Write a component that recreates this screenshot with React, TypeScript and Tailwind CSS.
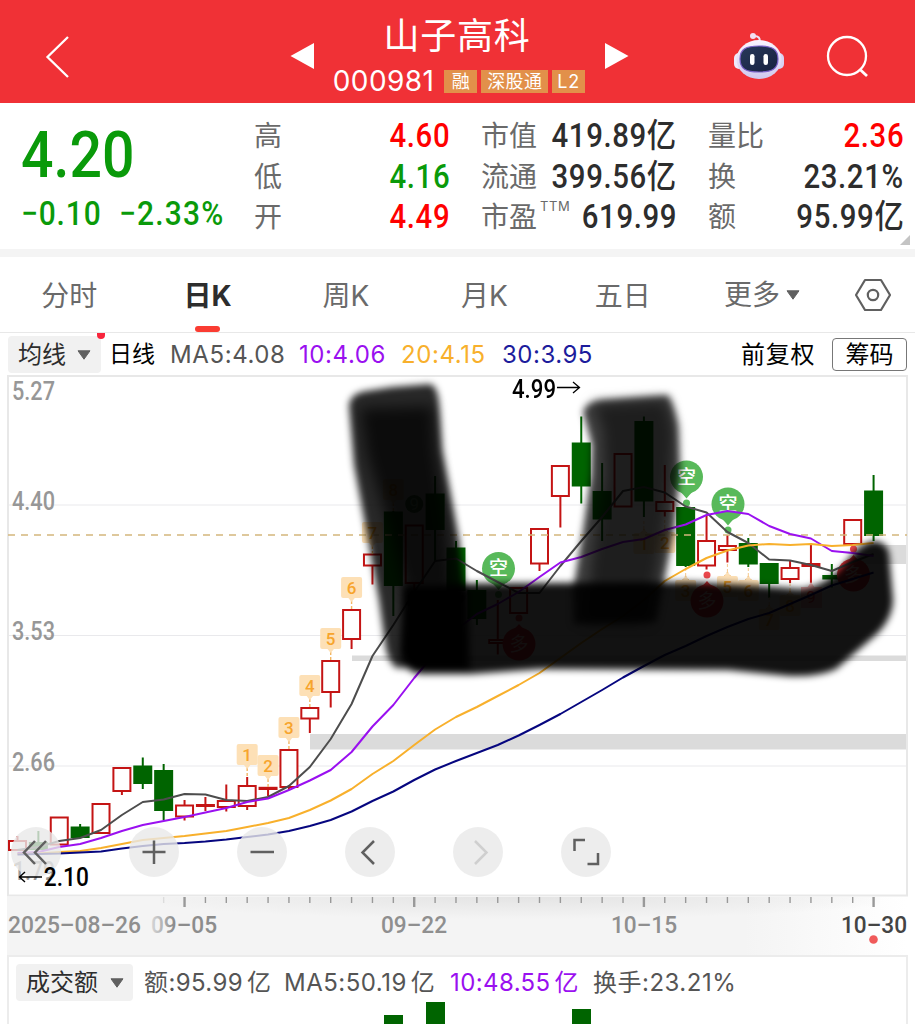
import type { ReactNode } from 'react'

const stats = [
  {
    width: 'w-[196px]',
    rows: [
      { label: '高', value: '4.60', color: 'text-[#ff0000]' },
      { label: '低', value: '4.16', color: 'text-[#0a9a0a]' },
      { label: '开', value: '4.49', color: 'text-[#ff0000]' },
    ],
  },
  {
    width: 'w-[196px]',
    rows: [
      { label: '市值', value: '419.89亿', color: 'text-[#2d2d2d]' },
      { label: '流通', value: '399.56亿', color: 'text-[#2d2d2d]' },
      { label: '市盈', sup: 'TTM', value: '619.99', color: 'text-[#2d2d2d]' },
    ],
  },
  {
    width: 'w-[196px]',
    rows: [
      { label: '量比', value: '2.36', color: 'text-[#ff0000]' },
      { label: '换', value: '23.21%', color: 'text-[#2d2d2d]' },
      { label: '额', value: '95.99亿', color: 'text-[#2d2d2d]' },
    ],
  },
]

const RED = '#c41414'
const GREEN = '#006400'
const STEP = 20.88
const cx = (i: number) => 17.5 + i * STEP

// [up?, high, bodyTop, bodyBottom, low]
const candles: [boolean, number, number, number, number][] = [
  [true, 836, 841, 850, 850],
  [false, 831, 843, 849, 849],
  [true, 817, 817.5, 844.5, 845],
  [false, 824, 827.5, 837, 838],
  [true, 804, 804, 833, 834],
  [true, 768, 768, 791, 795],
  [false, 757.5, 766.5, 783, 789],
  [false, 764, 771, 810, 820],
  [true, 800, 805.5, 816.5, 820.5],
  [true, 797, 805, 806, 811],
  [true, 784.5, 801, 807, 811.5],
  [true, 777, 786, 806, 810],
  [true, 787, 787.8, 789, 796],
  [true, 750, 750, 787, 790],
  [true, 708, 708, 718.5, 733],
  [true, 661, 661, 692, 707.5],
  [true, 610, 610, 639, 649],
  [true, 554, 554.5, 565.5, 584.5],
  [false, 511, 512.5, 585, 616],
  [true, 525.5, 525.5, 583, 590],
  [false, 476, 494.5, 529, 561],
  [false, 541, 548.5, 590, 592],
  [false, 580, 591, 618, 625],
  [true, 600, 640, 643, 654.5],
  [true, 588, 588, 613, 613],
  [true, 529, 529, 563.5, 571],
  [true, 466, 466, 496, 527.5],
  [false, 416.5, 443.5, 485.5, 503.5],
  [false, 463, 492, 518.5, 541],
  [true, 454, 454, 506.5, 506.5],
  [false, 416.5, 422, 500.5, 517],
  [true, 465, 502, 511, 516.5],
  [false, 507, 508, 565, 567],
  [true, 515, 541, 565.5, 569.5],
  [true, 535, 546, 550, 562.5],
  [false, 538, 544, 563.5, 567],
  [false, 563, 564, 583, 598],
  [true, 560, 568, 579, 583],
  [true, 543, 564, 566, 583],
  [false, 564, 576, 578.5, 587.5],
  [true, 520, 520, 544, 544],
  [false, 475, 491.5, 535, 541],
]

const averages = [
  {
    color: '#4d4d4d',
    values: [850, 847, 841, 838, 830, 815, 802, 799.5, 794, 794.5, 800, 801, 797, 786, 767, 739, 704, 656, 625, 592, 561, 558.5, 571, 582, 593, 593, 566, 541, 517, 491, 487, 492.5, 506.5, 512.5, 532, 543, 559.5, 560.5, 565, 571, 562, 554],
  },
  {
    color: '#9a10f0',
    values: [853, 852, 847, 844, 838, 831, 825, 821, 817, 812.5, 808, 802, 798.5, 790, 780.5, 770, 752, 726.5, 705, 678, 653, 630, 614, 604, 592, 577, 562.5, 557, 549, 542, 539, 530, 524.5, 515, 511, 514, 526, 534, 538.5, 551, 553, 556],
  },
  {
    color: '#f8b02c',
    values: [854, 853.5, 852, 851, 848, 844, 840, 838, 836, 833.5, 831, 827, 823, 818, 810, 800.5, 789, 774, 761, 745, 729.5, 717, 707, 696, 685, 673, 658, 643, 629, 616, 600, 581, 569, 558, 550.5, 545.5, 544, 545, 544, 546, 545, 543],
  },
  {
    color: '#06067f',
    values: [854.5, 854, 853.5, 852.5, 851.5, 848.5, 846, 844, 843, 841.5, 839.5, 837, 834.5, 831, 826, 820, 811.5, 801, 791.5, 780, 769.5, 761, 753, 745, 735.5, 725, 714, 702, 690, 677.5, 666, 655, 646, 636, 627, 619, 613, 604, 595, 585.5, 579, 572.5],
  },
]

const countsAbove: [number, number, string][] = [
  [11, 744, '1'],
  [12, 755, '2'],
  [13, 717, '3'],
  [14, 675, '4'],
  [15, 628, '5'],
  [16, 577, '6'],
  [17, 522, '7'],
  [18, 479, '8'],
]

const countsBelow: [number, number, string][] = [
  [30, 530, '1'],
  [31, 529, '2'],
  [32, 577, '3'],
  [34, 573, '5'],
  [35, 577, '6'],
  [36, 606, '7'],
  [37, 592, '8'],
]

function Value({ children, className = '' }: { children: ReactNode; className?: string }) {
  return (
    <span className={'inline-block whitespace-nowrap font-[Roboto,"Noto_Sans_CJK_SC",sans-serif] font-medium ' + className}>
      {children}
    </span>
  )
}

function Caret({ className = '' }: { className?: string }) {
  return (
    <svg width="14" height="10" viewBox="0 0 14 10" className={className}>
      <path d="M1 0.8h12L7 9.2z" fill="#606060" stroke="#606060" strokeLinejoin="round" />
    </svg>
  )
}

function Robot() {
  return (
    <svg width="52" height="48" viewBox="0 0 52 48">
      <defs>
        <linearGradient id="shell" x1="0" y1="0" x2="0" y2="1">
          <stop offset="0" stopColor="#fbf5ff" />
          <stop offset="1" stopColor="#cfc8ee" />
        </linearGradient>
        <linearGradient id="face" x1="0" y1="0" x2="1" y2="1">
          <stop offset="0" stopColor="#28395a" />
          <stop offset="1" stopColor="#17203f" />
        </linearGradient>
      </defs>
      <path d="M26.500 10C27.500 6 25.500 4 21 4" fill="none" stroke="#ece4f8" strokeWidth="2" />
      <circle cx="20" cy="4" r="3" fill="#f3dff2" />
      <rect x="1" y="21" width="10" height="16" rx="5" fill="#efe9fb" />
      <rect x="41" y="21" width="10" height="16" rx="5" fill="#d9d2f3" />
      <ellipse cx="26" cy="27.500" rx="22.500" ry="19.500" fill="url(#shell)" />
      <path d="M26 14c13 0 19 3 19 13s-6 13-19 13S7 37 7 27s6-13 19-13z" fill="url(#face)" stroke="#7b62c8" strokeWidth="1.200" />
      <rect x="17" y="22" width="4.500" height="11" rx="2.200" fill="#fff" />
      <rect x="30.500" y="22" width="4.500" height="11" rx="2.200" fill="#fff" />
    </svg>
  )
}

function Header() {
  return (
    <header className="flex h-[103px] items-start bg-[#f03136] text-white">
      <svg width="30" height="46" viewBox="0 0 30 46" className="mt-[34px] ml-[42px]">
        <path d="M26 3L5.500 23L26 43" fill="none" stroke="#fff" strokeWidth="2.300" />
      </svg>
      <svg width="24" height="26" viewBox="0 0 24 26" className="mt-[43px] ml-[218px]">
        <path d="M0.500 13L24 0v26z" fill="#fff" />
      </svg>
      <div className="ml-[10px] flex w-[270px] flex-col items-center">
        <h1 className="mt-[9px] mr-[4px] text-[36px] leading-[54px] tracking-[0.8px]">山子高科</h1>
        <div className="mt-[2px] flex items-center gap-1">
          <span className="mr-[6px] text-[28px] leading-[32px] tracking-[0.4px]">000981</span>
          <span className="flex h-[23px] w-[33px] items-center justify-center bg-[#e2904a] text-[18px]">融</span>
          <span className="flex h-[23px] w-[67px] items-center justify-center bg-[#e2904a] text-[18px] tracking-[0.3px]">深股通</span>
          <span className="flex h-[23px] w-[33px] items-center justify-center bg-[#e2904a] text-[18px] tracking-[1px]">L2</span>
        </div>
      </div>
      <svg width="24" height="26" viewBox="0 0 24 26" className="mt-[43px] ml-[11px]">
        <path d="M23.500 13L0 0v26z" fill="#fff" />
      </svg>
      <div className="mt-[32px] ml-[104px]"><Robot /></div>
      <svg width="46" height="46" viewBox="0 0 46 46" className="mt-[34px] ml-[40px]">
        <circle cx="22" cy="22" r="19" fill="none" stroke="#fff" strokeWidth="2.300" />
        <path d="M34.500 35L42 42" stroke="#fff" strokeWidth="2.800" />
      </svg>
    </header>
  )
}

function Quote() {
  return (
    <section className="relative flex h-[146px] pt-[13px]">
      <div className="ml-[21px] w-[233px] text-[#0a9a0a]">
        <Value className="mt-[6px] origin-left scale-x-[0.88] text-[65px] leading-[66px]">4.20</Value>
        <div className="flex text-[34px] leading-[40px]">
          <Value className="mt-[5px] w-[98px] origin-left scale-x-[0.88] tracking-[1px]">−0.10</Value>
          <Value className="mt-[5px] origin-left scale-x-[0.88] tracking-[1.4px]">−2.33%</Value>
        </div>
      </div>
      <div className="flex gap-[31px]">
        {stats.map((col, i) => (
          <div key={i} className={col.width}>
            {col.rows.map((row) => (
              <div key={row.label} className="flex h-[40.500px] items-center justify-between">
                <span className="flex items-start text-[28px] leading-[40px] whitespace-nowrap text-[#6a6a6a]">
                  {row.label}
                  {row.sup && <span className="mt-[1px] ml-[3px] w-0 text-[13px] leading-[16px] tracking-[0.6px]">{row.sup}</span>}
                </span>
                <Value className={'-ml-8 origin-right scale-x-[0.89] text-[33px] leading-[40px] tracking-[0.7px] ' + row.color}>{row.value}</Value>
              </div>
            ))}
          </div>
        ))}
      </div>
      <svg width="10" height="10" className="absolute right-[5px] bottom-[4px]"><path d="M10 0v10H0z" fill="#c4c4c4" /></svg>
    </section>
  )
}

function Tabs() {
  const tabs = ['分时', '日K', '周K', '月K', '五日']
  return (
    <nav className="flex h-[76px] items-center border-b border-[#e8e8e8] text-[28px] text-[#6a6a6a]">
      {tabs.map((tab) => (
        <div key={tab} className={'flex h-full w-[138.400px] flex-col items-center justify-end ' + (tab === '日K' ? 'font-bold text-[#2d2d2d]' : '')}>
          <span className="leading-[40px]">{tab}</span>
          {tab === '日K' ? <i className="mt-[10px] h-[6px] w-[25px] rounded-full bg-[#fa3c32]" /> : <i className="mt-[10px] h-[6px]" />}
        </div>
      ))}
      <span className="ml-[32px] flex items-center gap-[6px]">更多<Caret /></span>
      <svg width="38" height="36" viewBox="0 0 38 36" className="ml-[54px]">
        <path d="M11 3h16l9 15l-9 15H11L2 18z" fill="none" stroke="#606060" strokeWidth="2.200" strokeLinejoin="round" />
        <circle cx="19" cy="18" r="5.200" fill="none" stroke="#606060" strokeWidth="2.200" />
      </svg>
    </nav>
  )
}

function AverageBar() {
  return (
    <div className="relative flex h-[42px] items-center pt-px pl-2 text-[24px] whitespace-nowrap text-black">
      <div className="flex h-[37px] w-[93px] items-center gap-[11px] rounded bg-[#f1f1f1] pl-[10px] text-[#2d2d2d]">均线<Caret /></div>
      <i className="absolute top-0 left-[97px] h-[6px] w-[8px] rounded-b-full bg-[#f8253c]" />
      <span className="ml-[8px] w-[61px] text-[23px]">日线</span>
      <span className="w-[129px] tracking-[0.600px] text-[#555]">MA5:4.08</span>
      <span className="w-[102px] tracking-[0.600px] text-[#9a10f0]">10:4.06</span>
      <span className="w-[101px] tracking-[0.600px] text-[#f8b02c]">20:4.15</span>
      <span className="w-[239px] tracking-[0.500px] text-[#1c1c9c]">30:3.95</span>
      <span className="w-[73px] tracking-[0.700px]">前复权</span>
      <span className="ml-[18px] flex h-[33px] w-[75px] items-center justify-center rounded border border-[#777]">筹码</span>
    </div>
  )
}

function CountTag({ x, y, text, below }: { x: number; y: number; text: string; below?: boolean }) {
  return (
    <g fill="#fde0b6">
      {below
        ? <path d={`M${x - 4} ${y + 4}l4 -5l4 5zM${x} ${y - 1}v-8`} stroke="#f6c98c" strokeDasharray="3 2" />
        : <path d={`M${x} ${y + 24}v10`} stroke="#f3b663" strokeWidth="1.400" strokeDasharray="3 2" />}
      {!below && <path d={`M${x - 4} ${y + 20}h8l-4 5z`} />}
      <rect x={x - 10.500} y={below ? y + 3 : y} width="21" height="21" rx="2" />
      <text x={x} y={y + (below ? 20 : 17)} textAnchor="middle" fontSize="17" fontWeight="500" fontFamily="Roboto" fill="#f7a42c">{text}</text>
    </g>
  )
}

function ShortPin({ x, y }: { x: number; y: number }) {
  return (
    <g>
      <path d={`M${x - 14} ${y + 8}Q${x - 5} ${y + 15} ${x} ${y + 21.500}Q${x + 5} ${y + 15} ${x + 14} ${y + 8}z`} fill="#58b95a" />
      <circle cx={x} cy={y} r="16.500" fill="#58b95a" />
      <circle cx={x} cy={y + 26} r="3.500" fill="#58b95a" />
      <text x={x} y={y + 6.500} textAnchor="middle" fontSize="19" fontWeight="500" fill="#fff">空</text>
    </g>
  )
}

function LongPin({ x, y }: { x: number; y: number }) {
  return (
    <g>
      <path d={`M${x - 13} ${y - 9}Q${x - 4} ${y - 15} ${x} ${y - 20}Q${x + 4} ${y - 15} ${x + 13} ${y - 9}z`} fill="#e8353a" />
      <circle cx={x} cy={y} r="16.500" fill="#e8353a" />
      <circle cx={x} cy={y - 26} r="3.500" fill="#ea474c" />
      <text x={x} y={y + 7} textAnchor="middle" fontSize="19" fill="#ffc8c8">多</text>
    </g>
  )
}

// Hand-drawn marker over the price area
function Marker() {
  return (
    <g fill="#000">
      <g filter="url(#soft)">
        <path opacity="0.84" d="M349 405Q351 393 366 391L392 387L430 384Q438 386 439 405L442 450L450 492L459 540L465 590L466 668L396 668Q387 660 385 644L379 600L368 540L354 465Z" />
        <path opacity="0.93" d="M404 584L690 582L748 585L800 589Q828 586 846 562Q858 546 872 541Q886 541 889 553L893 600Q893 617 878 633L836 669Q819 677 790 676L728 670L540 669L470 674L420 674Q402 671 400 652Z" />
        <path opacity="0.85" d="M402 590L468 590L470 670L416 670Q402 660 402 640Z" />
      </g>
      <g filter="url(#softer)">
        <path opacity="0.7" d="M360 408L433 406L435 450L446 520L454 590L405 590L390 530L367 455Z" />
      </g>
      <g filter="url(#soft)">
        <path opacity="0.74" d="M583 412Q586 402 600 400L640 397L668 395Q674 404 678 425L680 470L674 530L664 580L656 622L574 624L573 590L583 530L591 475L592 445Z" />
      </g>
      <g filter="url(#softer)">
        <path opacity="0.55" d="M592 404L666 400L674 430L672 475L664 540L648 622L584 622L592 550L604 475L602 430Z" />
      </g>
    </g>
  )
}

const buttons: { icon: ReactNode; gap: string }[] = [
  { gap: 'mr-[68px]', icon: <path d="M24 14L13 25.500L24 37M35 14L24 25.500L35 37" /> },
  { gap: 'mr-[58px]', icon: <path d="M13.500 25H36.500M25 13.500V37" /> },
  { gap: 'mr-[58px]', icon: <path d="M13.500 25H37" /> },
  { gap: 'mr-[58px]', icon: <path d="M29 14L17.500 25.500L29 37" /> },
  { gap: 'mr-[58px]', icon: <path d="M22 14L33.500 25.500L22 37" stroke="#cfcfcf" /> },
  { gap: '', icon: <path d="M24 13H13.500V24M26.500 37H37V26" /> },
]

function Chart() {
  return (
    <div className="relative h-[522px]">
      <svg width="915" height="522" viewBox="0 375 915 522" className="block font-[Roboto,'Noto_Sans_CJK_SC',sans-serif]">
        <defs>
          <filter id="soft" x="-10%" y="-10%" width="120%" height="120%">
            <feGaussianBlur stdDeviation="3.600" />
          </filter>
          <filter id="softer" x="-20%" y="-20%" width="140%" height="140%">
            <feGaussianBlur stdDeviation="7" />
          </filter>
        </defs>
        <path d="M8 505H907M8 635.500H907M8 766H907" stroke="#e9e9ec" strokeWidth="1" />
        <g fill="#dbdbdb">
          <rect x="310" y="734" width="597" height="15.500" />
          <rect x="352" y="655.500" width="555" height="5.500" />
          <rect x="853" y="545" width="54" height="19" />
        </g>
        <rect x="8" y="376" width="899" height="519.500" fill="none" stroke="#e8e8e8" strokeWidth="2" />
        <g fontSize="25" fontWeight="500" fill="#979797">
          <text x="12" y="399.500" textLength="43" lengthAdjust="spacingAndGlyphs">5.27</text>
          <text x="12" y="509.500" textLength="43" lengthAdjust="spacingAndGlyphs">4.40</text>
          <text x="12" y="639.500" textLength="43" lengthAdjust="spacingAndGlyphs">3.53</text>
          <text x="12" y="770.500" textLength="43" lengthAdjust="spacingAndGlyphs">2.66</text>
          <text x="13" y="880" textLength="42" lengthAdjust="spacingAndGlyphs">1.79</text>
        </g>
        {candles.map(([up, high, top, bottom, low], i) => (
          <g key={i} stroke={up ? RED : GREEN} strokeWidth="2">
            <path d={`M${cx(i)} ${high}V${top}M${cx(i)} ${bottom}V${low}`} />
            <rect x={cx(i) - 8.500} y={top} width="17" height={bottom - top} fill={up ? '#fff' : GREEN} />
          </g>
        ))}
        {countsAbove.map(([i, y, text]) => <CountTag key={i} x={cx(i)} y={y} text={text} />)}
        {countsBelow.map(([i, y, text]) => <CountTag key={i} x={cx(i)} y={y} text={text} below />)}
        <circle cx={cx(19)} cy="504" r="9" fill="#3f8a45" />
        <text x={cx(19)} y="510" textAnchor="middle" fontSize="17" fill="#9fd0a0">9</text>
        <path d="M807 588l4 -6l4 6zM801 587h21v21h-21z" fill="#f9b9b9" />
        <text x="811" y="603" textAnchor="middle" fontSize="17" fill="#e8353a">9</text>
        <ShortPin x={498.500} y={568.500} />
        <ShortPin x={686.500} y={477} />
        <ShortPin x={728} y={504} />
        <LongPin x={519} y={644} />
        <LongPin x={707} y={601} />
        <LongPin x={853.500} y={575} />
        <path d="M8 535H907" stroke="#d3b67c" strokeWidth="1.400" strokeDasharray="7 6" />
        {averages.map((line) => (
          <polyline key={line.color} points={line.values.map((y, i) => `${cx(i)},${y}`).join(' ')} fill="none" stroke={line.color} strokeWidth="2" strokeLinejoin="round" />
        ))}
        <Marker />
        <g fontSize="26" fontWeight="500" fill="#000">
          <text x="512" y="397.500" textLength="44" lengthAdjust="spacingAndGlyphs">4.99</text>
          <path d="M557 387.500H579M573 382L579.500 387.500L573 393" fill="none" stroke="#000" strokeWidth="1.300" />
        </g>
      </svg>
      <div className="absolute top-[452px] left-[10.500px] flex">
        {buttons.map((b, i) => (
          <button key={i} className={'h-[50px] w-[50px] rounded-full bg-[#e8e8e8]/80 ' + b.gap}>
            <svg width="50" height="50" viewBox="0 0 50 50" fill="none" stroke="#606060" strokeWidth="2.500">{b.icon}</svg>
          </button>
        ))}
      </div>
      <div className="absolute top-[487px] left-[18px] flex items-center">
        <svg width="24" height="14" viewBox="0 0 24 14"><path d="M24 7H2M7 2L1.500 7L7 12" fill="none" stroke="#000" strokeWidth="1.400" /></svg>
        <Value className="origin-left scale-x-[0.89] pl-[2px] text-[25.500px] leading-[30px]">2.10</Value>
      </div>
    </div>
  )
}

function DateAxis() {
  return (
    <svg width="915" height="58" viewBox="0 897 915 58" className="block font-[Roboto]">
      <defs>
        <linearGradient id="strip" x1="0" x2="1" y1="0" y2="0">
          <stop offset="0" stopColor="#f4f4f4" />
          <stop offset="0.820" stopColor="#f4f4f4" />
          <stop offset="1" stopColor="#fff" />
        </linearGradient>
        <radialGradient id="shade" cx="0.500" cy="0" r="0.550">
          <stop offset="0" stopColor="#e4e4e4" />
          <stop offset="1" stopColor="#e4e4e4" stopOpacity="0" />
        </radialGradient>
        <linearGradient id="fade" x1="0" x2="1">
          <stop offset="0" stopColor="#d8d8d8" />
          <stop offset="0.350" stopColor="#8c8c8c" />
        </linearGradient>
      </defs>
      <rect x="7" y="897" width="900" height="58" fill="url(#strip)" />
      <rect x="160" y="897" width="720" height="40" fill="url(#shade)" />
      {Array.from({ length: 35 }, (_, k) => k + 7).map((i) => (
        <path key={i} d={`M${cx(i)} 897V${[8, 19, 30, 41].includes(i) ? 907 : 903}`} stroke={i === 7 ? '#dcdcdc' : '#999'} strokeWidth={[8, 19, 30, 41].includes(i) ? 2.4 : 1.4} />
      ))}
      <g fontSize="24.500" fontWeight="500" fill="#8f8f8f">
        <text x="8" y="933" textLength="133" lengthAdjust="spacingAndGlyphs">2025–08–26</text>
        <text x="151" y="933" textLength="66" lengthAdjust="spacingAndGlyphs" fill="url(#fade)">09–05</text>
        <text x="381" y="933" textLength="66" lengthAdjust="spacingAndGlyphs">09–22</text>
        <text x="611" y="933" textLength="66" lengthAdjust="spacingAndGlyphs">10–15</text>
        <text x="841" y="933" textLength="66" lengthAdjust="spacingAndGlyphs" fill="#444">10–30</text>
      </g>
      <circle cx="873.500" cy="939.500" r="4.300" fill="#f05a5a" />
    </svg>
  )
}

function Volume() {
  return (
    <section className="mr-[7px] ml-[7px] flex h-[69px] flex-col overflow-hidden border-x-2 border-t-2 border-[#ececec]">
      <div className="mt-[7px] flex h-[37px] items-center pl-[7px] text-[24px] whitespace-nowrap text-[#555]">
        <div className="flex h-[37px] w-[117px] shrink-0 items-center gap-[12px] rounded bg-[#f1f1f1] pl-[10px] text-[#2d2d2d]">成交额<Caret /></div>
        <span className="ml-[11px] w-[140px] shrink-0 tracking-[0.400px]">额:95.99<span className="ml-1">亿</span></span>
        <span className="w-[166px] shrink-0 tracking-[0.500px]">MA5:50.19<span className="ml-1">亿</span></span>
        <span className="w-[143px] shrink-0 tracking-[0.400px] text-[#9a10f0]">10:48.55<span className="ml-1">亿</span></span>
        <span className="tracking-[0.500px]">换手:23.21%</span>
      </div>
      <div className="flex flex-1 items-end">
        <i className="ml-[375px] h-[9px] w-[19px] bg-[#006400]" />
        <i className="ml-[23px] h-[22px] w-[19px] bg-[#006400]" />
        <i className="ml-[127px] h-[15px] w-[19px] bg-[#006400]" />
      </div>
    </section>
  )
}

export default function App() {
  return (
    <main className="h-[1024px] w-[915px] overflow-hidden bg-white font-[Inter,'Noto_Sans_CJK_SC',sans-serif]">
      <Header />
      <Quote />
      <div className="h-2 bg-[#f4f4f4]" />
      <Tabs />
      <AverageBar />
      <Chart />
      <DateAxis />
      <Volume />
    </main>
  )
}
